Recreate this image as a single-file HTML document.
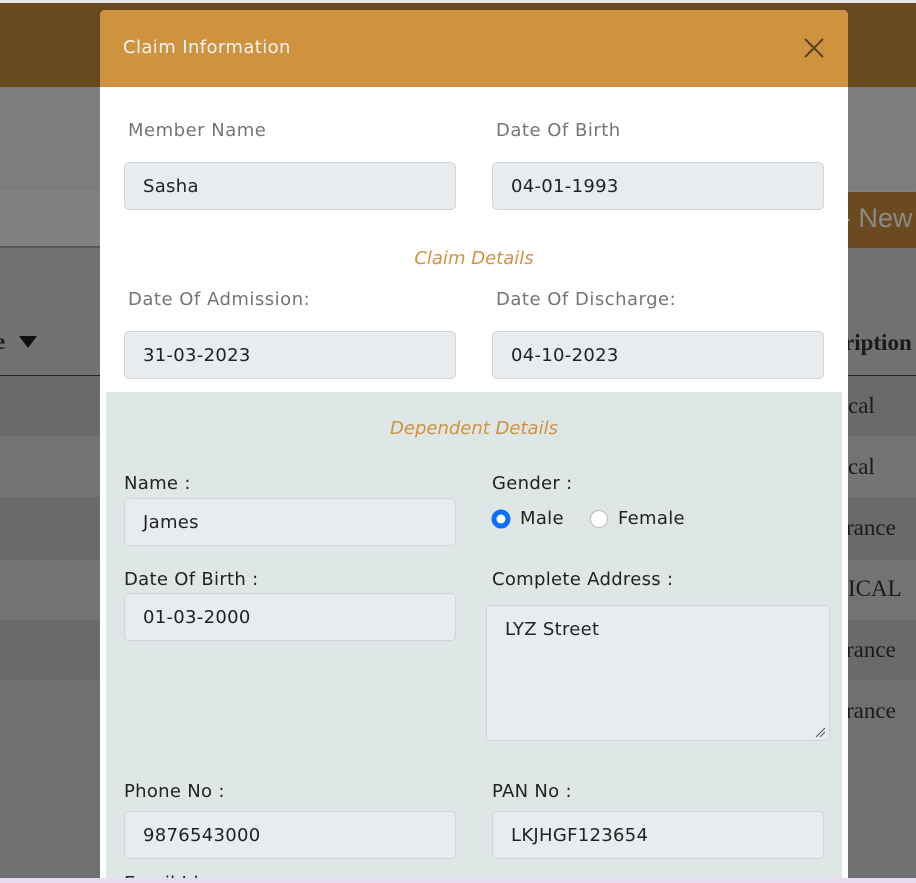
<!DOCTYPE html>
<html><head><meta charset="utf-8">
<style>
*{box-sizing:border-box;margin:0;padding:0}
body{width:916px;height:883px;overflow:hidden;position:relative;background:#707070;font-family:"DejaVu Sans","Liberation Sans",sans-serif}
.abs{position:absolute}
.lbl{position:absolute;font-size:18px;letter-spacing:.5px;color:#757575}
.lbl2{position:absolute;font-size:18px;letter-spacing:.3px;color:#222}
.inp{position:absolute;background:#e8ecef;border:1px solid #cfd4da;border-radius:5px;font-size:18px;letter-spacing:.3px;color:#222;padding-left:18px;display:flex;align-items:center}
.sec{position:absolute;font-size:18px;color:#cf9340;font-style:italic;text-align:center}
.serif{position:absolute;font-family:"Liberation Serif",serif;font-size:23px;color:#1a1a1a}
</style></head><body>
<div class="abs" style="left:0;top:0;width:916px;height:3px;background:#e5e5e5"></div>
<div class="abs" style="left:0;top:3px;width:916px;height:84px;background:#694a20"></div>
<div class="abs" style="left:0;top:87px;width:916px;height:103px;background:#7d7d7d"></div>
<div class="abs" style="left:0;top:190px;width:916px;height:56px;background:#818181;box-shadow:0 2px 3px rgba(0,0,0,.3)"></div>
<div class="abs" style="left:848px;top:192px;width:68px;height:56px;background:#6b4a20"></div>
<div class="abs" style="left:842px;top:203px;font-family:'Liberation Sans',sans-serif;font-size:27px;color:#8a8a8a">- New</div>
<div class="abs" style="left:0;top:248px;width:916px;height:128px;background:#727272"></div>
<div class="abs" style="left:0;top:375px;width:916px;height:1px;background:#222"></div>
<div class="abs" style="left:0;top:376px;width:916px;height:60px;background:#6a6a6a"></div>
<div class="abs" style="left:0;top:436px;width:916px;height:61px;background:#737373"></div>
<div class="abs" style="left:0;top:497px;width:916px;height:63px;background:#6a6a6a"></div>
<div class="abs" style="left:0;top:560px;width:916px;height:60px;background:#737373"></div>
<div class="abs" style="left:0;top:620px;width:916px;height:60px;background:#6a6a6a"></div>
<div class="serif" style="left:-5px;top:329px;font-weight:bold">e</div>
<svg class="abs" style="left:19px;top:336px" width="18" height="13"><path d="M0 0H18L9 12Z" fill="#111"/></svg>
<div class="serif" style="left:844px;top:330px;font-weight:bold">ription</div>
<div class="serif" style="left:848px;top:393px">cal</div>
<div class="serif" style="left:848px;top:454px">cal</div>
<div class="serif" style="left:846px;top:515px">rance</div>
<div class="serif" style="left:848px;top:576px">ICAL</div>
<div class="serif" style="left:846px;top:637px">rance</div>
<div class="serif" style="left:846px;top:698px">rance</div>

<div class="abs" style="left:100px;top:10px;width:748px;height:873px;background:#fff;border-radius:5px 5px 0 0;overflow:hidden">
 <div class="abs" style="left:0;top:0;width:748px;height:77px;background:#cf9340"></div>
 <div class="abs" style="left:23px;top:27px;font-size:18px;letter-spacing:.4px;color:#f3f3f3">Claim Information</div>
 <svg class="abs" style="left:704px;top:28px" width="20" height="20" viewBox="0 0 20 20"><path d="M1 1L19 19M19 1L1 19" stroke="#5a4020" stroke-width="2"/></svg>
 <div class="abs" style="left:6px;top:382px;width:736px;height:500px;background:#dfe7e6"></div>
</div>

<div class="lbl" style="left:128px;top:120px">Member Name</div>
<div class="lbl" style="left:496px;top:120px">Date Of Birth</div>
<div class="inp" style="left:124px;top:162px;width:332px;height:48px">Sasha</div>
<div class="inp" style="left:492px;top:162px;width:332px;height:48px">04-01-1993</div>
<div class="sec" style="left:100px;width:748px;top:248px">Claim Details</div>
<div class="lbl" style="left:128px;top:289px">Date Of Admission:</div>
<div class="lbl" style="left:496px;top:289px">Date Of Discharge:</div>
<div class="inp" style="left:124px;top:331px;width:332px;height:48px">31-03-2023</div>
<div class="inp" style="left:492px;top:331px;width:332px;height:48px">04-10-2023</div>

<div class="sec" style="left:100px;width:748px;top:418px">Dependent Details</div>
<div class="lbl2" style="left:124px;top:473px">Name :</div>
<div class="lbl2" style="left:492px;top:473px">Gender :</div>
<div class="inp" style="left:124px;top:498px;width:332px;height:48px">James</div>
<svg class="abs" style="left:491px;top:509px" width="20" height="20"><circle cx="10" cy="10" r="7" fill="#fff" stroke="#0d6efd" stroke-width="5"/></svg>
<div class="lbl2" style="left:520px;top:508px">Male</div>
<svg class="abs" style="left:589px;top:509px" width="20" height="20"><circle cx="10" cy="10" r="8.5" fill="#fff" stroke="#bbb" stroke-width="1"/></svg>
<div class="lbl2" style="left:618px;top:508px">Female</div>
<div class="lbl2" style="left:124px;top:569px">Date Of Birth :</div>
<div class="lbl2" style="left:492px;top:569px">Complete Address :</div>
<div class="inp" style="left:124px;top:593px;width:332px;height:48px">01-03-2000</div>
<div class="inp" style="left:486px;top:605px;width:344px;height:136px;align-items:flex-start;padding-top:13px">LYZ Street</div>
<svg class="abs" style="left:814px;top:726px" width="12" height="12"><path d="M2 11L11 2M6 11L11 6" stroke="#555" stroke-width="1"/></svg>
<div class="lbl2" style="left:124px;top:781px">Phone No :</div>
<div class="lbl2" style="left:492px;top:781px">PAN No :</div>
<div class="inp" style="left:124px;top:811px;width:332px;height:48px">9876543000</div>
<div class="inp" style="left:492px;top:811px;width:332px;height:48px">LKJHGF123654</div>
<div class="lbl2" style="left:124px;top:873px;height:5px;overflow:hidden">Email Id :</div>
<div class="abs" style="left:0;top:878px;width:916px;height:5px;background:#e9dcef"></div>
</body></html>
